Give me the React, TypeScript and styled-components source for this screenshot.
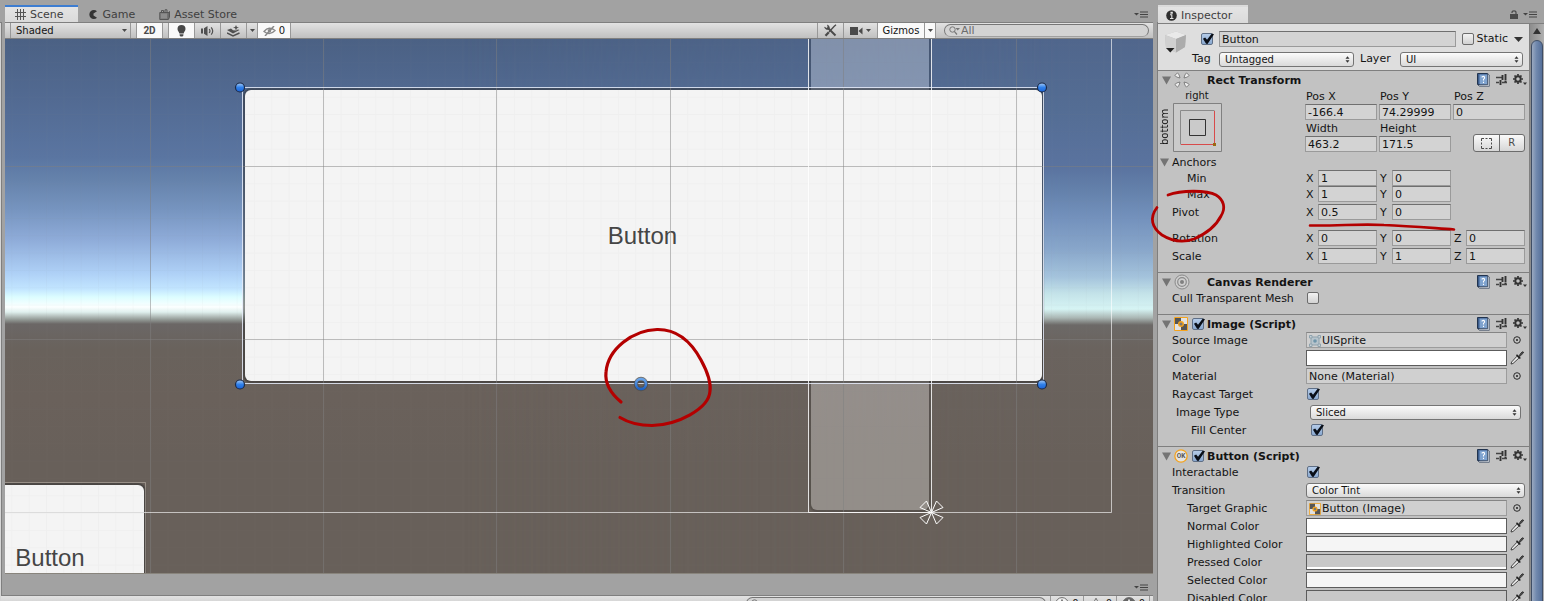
import React, { useId } from 'react';
import styled, { createGlobalStyle, css } from 'styled-components';

const uiFont = '"DejaVu Sans", Verdana, sans-serif';
const line = '#7f7f7f';

const GlobalStyle = createGlobalStyle`
  *, *::before, *::after { box-sizing: border-box; }
  body { margin: 0; background: #a2a2a2; color: #141414; font: 11px/16px ${uiFont}; }
  button, input, select { margin: 0; font: inherit; color: inherit; }
  svg { display: block; flex: none; }
`;

/* ---------- shell ---------- */

const Shell = styled.div`
  display: grid;
  grid-template-columns: 5px minmax(0, 1fr) 387px;
  grid-template-rows: minmax(0, 1fr);
  height: 100vh;
  overflow: hidden;
`;

const LeftSliver = styled.div`
  margin: 22px 3px 0 0;
  background: #d6d6d6;
  border-top: 1px solid ${line};
  border-right: 1px solid ${line};
`;

const Workspace = styled.main`
  display: flex;
  flex-direction: column;
  min-width: 0;
  padding-right: 4px;
`;

const TabBar = styled.div<{ $height: number }>`
  display: flex;
  flex: none;
  align-items: flex-end;
  height: ${(p) => p.$height}px;
  color: #3c3c3c;
`;

const Tab = styled.button<{ $active?: boolean; $focused?: boolean }>`
  display: flex;
  align-items: center;
  gap: 4px;
  height: 17px;
  padding: 0 14px 0 10px;
  border: 0;
  border-top: 2px solid transparent;
  background: none;
  color: #3f3f3f;
  line-height: 15px;
  ${(p) => p.$active && css`background: linear-gradient(#e4e4e4, #dadada);`}
  ${(p) => p.$focused && css`border-top-color: #3d7dd1;`}
`;

const InspectorTab = styled(Tab)`
  height: 18px;
  padding: 0 16px 0 8px;
`;

const TabTools = styled.div<{ $end?: number }>`
  display: flex;
  align-items: center;
  gap: 5px;
  margin-left: auto;
  padding: 0 ${(p) => p.$end ?? 5}px 4px 0;
`;

const Toolbar = styled.div`
  display: flex;
  flex: none;
  height: 17px;
  border-top: 1px solid ${line};
  border-bottom: 1px solid ${line};
  background: linear-gradient(#e2e2e2, #c0c0c0);
`;

const ConsoleBar = styled(Toolbar)`
  margin: 0 0 -11px -4px;
`;

const ToolButton = styled.button<{ $on?: boolean; $width: number }>`
  display: flex;
  align-items: center;
  justify-content: center;
  gap: 3px;
  width: ${(p) => p.$width}px;
  padding: 0;
  border: 0;
  border-right: 1px solid #989898;
  background: ${(p) => (p.$on ? '#f9f9f9' : 'none')};
  font-size: 10px;
  line-height: 15px;
  color: #141414;
`;

const BoldText = styled.b`
  font: bold 10px/15px Roboto, sans-serif;
  color: #4a4a4a;
`;

const ToolGap = styled.span<{ $width: number }>`
  flex: none;
  width: ${(p) => p.$width}px;
  border-right: 1px solid #989898;
`;

const Spacer = styled.span`
  flex: 1;
`;

const ShadeWrap = styled.label`
  position: relative;
  display: flex;
  width: 120px;
  border-right: 1px solid #989898;
  svg { position: absolute; right: 3px; top: 5px; pointer-events: none; }
`;

const ShadeSelect = styled.select`
  appearance: none;
  width: 100%;
  padding: 0 5px;
  border: 0;
  background: none;
  font-size: 10px;
  line-height: 15px;
`;

const SearchBox = styled.label<{ $width: number }>`
  display: flex;
  align-items: center;
  gap: 1px;
  width: ${(p) => p.$width}px;
  height: 13px;
  margin: 1px 4px 1px 8px;
  padding-left: 4px;
  border: 1px solid #767676;
  border-bottom-color: #a0a0a0;
  border-radius: 7px;
  background: #d3d3d3;
`;

const SearchInput = styled.input`
  flex: 1;
  min-width: 0;
  height: 11px;
  padding: 0;
  border: 0;
  outline: 0;
  background: none;
  line-height: 11px;
  &::placeholder { color: #6c6c6c; opacity: 1; }
`;

const ConsoleIcons = styled.div`
  display: flex;
  gap: 1px;
  padding-right: 3px;
  border-left: 1px solid #989898;
`;

/* ---------- scene ---------- */

const Viewport = styled.section`
  position: relative;
  flex: 1;
  min-height: 0;
  overflow: hidden;
  border-bottom: 1px solid #88847c;
  background: linear-gradient(#4b6184 0, #526a92 60px, #5a75a1 118px, #6683ac 142px, #7694bf 170px, #8eabd8 200px, #aed0f6 234px, #c2e5ff 250px, #dcfdff 258px, #fcffff 268px, #e0f0ee 273px, #8f9591 281px, #6b6766 285px, #69625c 310px, #6a615b 360px, #68605a 420px);
  &::before {
    content: '';
    position: absolute;
    inset: 0;
    background: linear-gradient(#50668c 0, #546d94 70px, #5a739f 128px, #6380aa 150px, #7492bd 180px, #88a6ca 210px, #a4c3dc 238px, #c4e3e9 255px, #d6f4f4 270px, #a9b5b2 279px, #6c6967 286px, #6a635e 310px, #68605a 420px);
    mask-image: linear-gradient(to right, transparent 40%, #000 92%);
  }
`;

const SceneWidget = styled.div<{ $x: number; $y: number; $w: number; $h: number }>`
  position: absolute;
  left: ${(p) => p.$x}px;
  top: ${(p) => p.$y}px;
  width: ${(p) => p.$w}px;
  height: ${(p) => p.$h}px;
`;

const ScrollTrack = styled(SceneWidget)`
  border-radius: 0 0 6px 6px;
  background: rgba(255, 255, 255, 0.29);
  box-shadow: 0 0 1px 2px rgba(40, 40, 40, 0.25);
`;

const UiButton = styled(SceneWidget).attrs({ as: 'button', type: 'button' })`
  display: flex;
  align-items: center;
  justify-content: center;
  padding: 0 2px 0 0;
  border: 0;
  border-radius: 6px;
  background: #f4f4f4;
  box-shadow: 0 0 1px 2px rgba(50, 50, 50, 0.55);
  font: 24px/28px "Liberation Sans", Arial, sans-serif;
  color: #454545;
`;

const SceneOverlay = styled.svg`
  position: absolute;
  inset: 0;
  width: 100%;
  height: 100%;
`;

/* ---------- inspector ---------- */

const InspectorPane = styled.aside`
  position: relative;
  display: flex;
  flex-direction: column;
  min-width: 0;
  border-left: 1px solid ${line};
  border-image: linear-gradient(transparent 23px, ${line} 23px) 1;
`;

const InspectorBody = styled.div`
  display: flex;
  flex: 1;
  min-height: 0;
  border-top: 1px solid ${line};
`;

const Components = styled.div`
  flex: 1;
  min-width: 0;
  overflow: hidden;
  background: #c2c2c2;
  border-right: 1px solid ${line};
`;

const ScrollBar = styled.div`
  width: 14px;
  padding: 0 1px;
  overflow: hidden;
  background: linear-gradient(to right, #8c8c8c, #b0b0b0);
  svg { margin: 4px auto 6px; }
`;

const ScrollThumb = styled.div`
  height: 100%;
  border: 1px solid #3f4e66;
  border-radius: 7px 7px 0 0;
  background: linear-gradient(to right, #9aa9c0, #7088ad 45%, #56709a);
`;

const ObjectHeader = styled.header`
  display: grid;
  grid-template-columns: 34px minmax(0, 1fr);
  height: 46px;
  padding: 7px 6px 2px 0;
  background: #dedede;
  > svg { margin-left: 6px; }
`;

const HeaderRows = styled.div`
  display: flex;
  flex-direction: column;
  gap: 4px;
`;

const HeaderLine = styled.div<{ $indent?: number }>`
  display: flex;
  align-items: center;
  gap: 6px;
  height: 16px;
  padding-left: ${(p) => p.$indent ?? 0}px;
`;

const FieldLabel = styled.label<{ $width: number }>`
  width: ${(p) => p.$width}px;
  margin-right: -6px;
`;

const StaticLabel = styled.label`
  display: flex;
  align-items: center;
  gap: 3px;
`;

const Section = styled.section`
  display: flex;
  flex-direction: column;
  gap: 2px;
  padding: 1px 4px 8px 14px;
  border-top: 1px solid ${line};
`;

const SectionTitle = styled.h2`
  display: flex;
  align-items: center;
  height: 16px;
  margin: 0 -2px -2px -10px;
  font-size: 11px;
  line-height: 16px;
`;

const TitleIcons = styled.span`
  display: flex;
  align-items: center;
  width: 35px;
  gap: 3px;
`;

const TitleText = styled.span`
  padding: 1px 0 0 10px;
`;

const TitleTools = styled.span`
  display: flex;
  align-items: center;
  gap: 6px;
  margin-left: auto;
`;

const Row = styled.div<{ $level?: number; $tight?: boolean; $apart?: boolean }>`
  display: grid;
  grid-template-columns: 134px minmax(0, 1fr);
  height: 16px;
  ${(p) => p.$tight && css`margin-top: -2px;`}
  ${(p) => p.$apart && css`margin-top: 8px;`}
  > label, > span:first-child {
    padding-left: ${(p) => p.$level ?? 0}px;
    line-height: 18px;
    white-space: nowrap;
  }
`;

const Control = styled.div<{ $inset?: number }>`
  display: flex;
  align-items: center;
  gap: 2px;
  min-width: 0;
  height: 16px;
  padding: 0 ${(p) => p.$inset ?? 0}px;
`;

const TextField = styled.input`
  flex: 1;
  width: 100%;
  min-width: 0;
  height: 16px;
  padding: 1px 2px 0;
  border: 1px solid #9a9a9a;
  border-top-color: #6f6f6f;
  border-radius: 0;
  outline: 0;
  background: #d3d3d3;
  line-height: 13px;
`;

const ObjectField = styled.button`
  display: flex;
  align-items: center;
  gap: 1px;
  flex: 1;
  height: 16px;
  padding: 1px 2px 0;
  border: 1px solid #9c9c9c;
  border-top-color: #858585;
  background: #d0d0d0;
  line-height: 13px;
  text-align: left;
`;

const Swatch = styled.button<{ $color: string; $alpha?: string }>`
  flex: 1;
  height: 16px;
  padding: 0;
  border: 1px solid #5c5c5c;
  background: linear-gradient(${(p) => p.$color} 12px, ${(p) => p.$alpha ?? p.$color} 12px);
`;

const IconButton = styled.button`
  display: flex;
  align-items: center;
  justify-content: center;
  width: 16px;
  height: 16px;
  padding: 0;
  border: 0;
  background: none;
`;

const Check = styled.input.attrs({ type: 'checkbox' })<{ $gap?: number }>`
  appearance: none;
  position: relative;
  flex: none;
  width: 12px;
  height: 12px;
  margin: 0 0 0 ${(p) => p.$gap ?? 0}px;
  border: 1px solid #6c6c6c;
  border-radius: 2px;
  background: linear-gradient(#f2f2f2, #d2d2d2);
  &:checked { background: linear-gradient(#b4cbe8, #8aa9d0); border-color: #5f6f86; }
  &:checked::after {
    content: '';
    position: absolute;
    inset: -1px -2px 0 0;
    background: #0a0f18;
    clip-path: polygon(8% 52%, 26% 40%, 42% 62%, 82% 4%, 100% 12%, 46% 100%, 34% 98%);
  }
`;

const PopupWrap = styled.span<{ $grow?: number }>`
  position: relative;
  display: block;
  flex: ${(p) => p.$grow ?? 1} 1 0;
  min-width: 0;
  height: 15px;
  svg { position: absolute; right: 4px; top: 4px; pointer-events: none; }
`;

const PopupSelect = styled.select`
  appearance: none;
  display: block;
  width: 100%;
  height: 15px;
  padding: 0 5px;
  border: 1px solid #747474;
  border-radius: 3px;
  background: linear-gradient(#fbfbfb, #dadada);
  font-size: 10px;
  line-height: 13px;
`;

const RectTop = styled.div`
  display: grid;
  grid-template-columns: 134px minmax(0, 1fr);
  margin-left: -1px;
`;

const AnchorWidget = styled.div`
  display: grid;
  grid-template-columns: 16px 48px;
  grid-template-rows: 15px 48px;
  justify-items: center;
  margin-left: -14px;
  font-size: 10px;
  line-height: 16px;
`;

const VerticalText = styled.span`
  grid-row: 2;
  writing-mode: vertical-rl;
  transform: rotate(180deg);
  text-align: center;
`;

const HorizontalText = styled.span`
  grid-column: 2;
`;

const RectFields = styled.div`
  display: grid;
  grid-template-columns: repeat(3, minmax(0, 1fr));
  column-gap: 2px;
`;

const StackedField = styled.label`
  display: grid;
  grid-template-rows: 16px 16px;
  line-height: 18px;
`;

const StackedLabel = styled.span`
  padding-left: 1px;
`;

const ModeButtons = styled.div`
  display: flex;
  align-self: end;
  justify-self: end;
  width: 52px;
  height: 18px;
  border: 1px solid #6c6c6c;
  border-radius: 3px;
  background: linear-gradient(#fafafa, #d6d6d6);
`;

const ModeButton = styled.button`
  display: flex;
  align-items: center;
  justify-content: center;
  flex: 1;
  padding: 0;
  border: 0;
  background: none;
  color: #4a4a4a;
  font-size: 10px;
  & + & { border-left: 1px solid #6c6c6c; }
`;

const VectorGrid = styled.div`
  display: grid;
  grid-template-columns: repeat(3, minmax(0, 1fr));
  gap: 2px;
  height: 16px;
  margin-left: -1px;
  line-height: 18px;
`;

const AxisField = styled.label`
  display: grid;
  grid-template-columns: 12px minmax(0, 1fr);
  padding-left: 1px;
`;

const FoldRow = styled.div`
  display: flex;
  align-items: center;
  gap: 3px;
  height: 16px;
  margin-left: -12px;
  padding-top: 1px;
`;

const Marker = styled.svg`
  position: absolute;
  left: 0;
  top: 0;
  overflow: visible;
  pointer-events: none;
`;

/* ---------- icons ---------- */

const MenuIcon = () => (
  <svg width="14" height="7" viewBox="0 0 14 7">
    <path d="M0 2h5L2.500 4.500z" fill="#444" />
    <path d="M6 1h8M6 3.500h8M6 6h8" stroke="#444" strokeWidth="1.100" />
  </svg>
);
const DownIcon = () => (
  <svg width="5" height="5" viewBox="0 0 5 5"><path d="M0 1h5L2.500 4z" fill="#4a4a4a" /></svg>
);
const WideDownIcon = () => (
  <svg width="9" height="5" viewBox="0 0 9 5"><path d="M0 0h9L4.500 5z" fill="#333" /></svg>
);
const SceneIcon = () => (
  <svg width="11" height="11" viewBox="0 0 11 11"><path d="M2.500 0v11M5.500 0v11M8.500 0v11M0 3.500h11M0 7.500h11" stroke="#555" /></svg>
);
const GameIcon = () => (
  <svg width="11" height="9" viewBox="0 0 11 9"><path d="M9 1.300A4.500 4.500 0 1 0 9 7.700L5.500 5.500v-2z" fill="#333" /></svg>
);
const StoreIcon = () => (
  <svg width="11" height="11" viewBox="0 0 11 11">
    <path d="M.8 3.500h8.400v7H.8z" fill="#808080" stroke="#555" />
    <path d="M2.500 3.500V1.500h2v2M6 3.500V.8h2v2.700M9.200 4l1.300-1.500v6L9.200 10.500" fill="none" stroke="#555" />
    <path d="M2 6h6M2 8h6" stroke="#999" />
  </svg>
);
const BulbIcon = () => (
  <svg width="9" height="12" viewBox="0 0 9 12"><path d="M4.500 0a4 4 0 0 1 4 4c0 2-1.500 2.500-1.800 4.500H2.300C2 6.500.5 6 .5 4a4 4 0 0 1 4-4zM2.600 9.300h3.800v1.200L5.500 11.500h-2l-.9-1z" fill="#484848" /></svg>
);
const AudioIcon = () => (
  <svg width="13" height="12" viewBox="0 0 13 12">
    <path d="M0 3.500h2v5H0zM3 3.300L6.500 1v10L3 8.700z" fill="#505050" />
    <path d="M8.200 4q1.500 2 0 4M10.200 2.300q3 3.700 0 7.400" fill="none" stroke="#505050" strokeWidth="1.200" />
  </svg>
);
const LayersIcon = () => (
  <svg width="13" height="12" viewBox="0 0 13 12">
    <path d="M0 5l4-1.500 2 1.800 3 .2 2-1 1.500.5L6 8.500z" fill="#505050" />
    <path d="M0 8l6 3 6.500-3" fill="none" stroke="#505050" strokeWidth="1.500" />
    <path d="M9 0l.9 1.900 2.100.6-2.100.8L9 5.500l-.9-2.200L6 2.500l2.100-.6z" fill="#505050" />
  </svg>
);
const EyeOffIcon = () => (
  <svg width="13" height="10" viewBox="0 0 13 10">
    <path d="M1 5.500Q6-.5 12 4.500 7 10 1 5.500z" fill="none" stroke="#888" strokeWidth="1.300" />
    <circle cx="6.500" cy="4.800" r="1.800" fill="#888" />
    <path d="M2 10L11 0" stroke="#888" strokeWidth="1.500" />
  </svg>
);
const ToolsIcon = () => (
  <svg width="13" height="13" viewBox="0 0 13 13">
    <path d="M4 4l7.500 7.500" stroke="#4a4a4a" strokeWidth="2" />
    <path d="M.6 3.300L2.500 4.300 4 3.200 3.500 1A3 3 0 0 1 4.800 5.200 3 3 0 0 1 .6 3.300z" fill="#4a4a4a" stroke="#4a4a4a" strokeWidth=".7" />
    <path d="M1.500 11.800L4.800 8.300" stroke="#4a4a4a" strokeWidth="2.300" />
    <path d="M5 8l5.500-6M10 2.500L12 .8" stroke="#4a4a4a" strokeWidth="1.300" />
  </svg>
);
const CameraIcon = () => (
  <svg width="13" height="8" viewBox="0 0 13 8"><path d="M0 0h8v8H0zM8.500 4L12.500.5v7z" fill="#4a4a4a" /></svg>
);
const SearchIcon = () => (
  <svg width="11" height="9" viewBox="0 0 11 9">
    <circle cx="3.500" cy="3.500" r="2.700" fill="none" stroke="#777" />
    <path d="M5.300 5.300L8 8.500" stroke="#777" strokeWidth="1.200" />
    <path d="M6.500 2h4.500L8.700 4.500z" fill="#777" />
  </svg>
);
const InfoIcon = () => (
  <svg width="11" height="11" viewBox="0 0 11 11">
    <circle cx="5.500" cy="5.500" r="5.300" fill="#2f2f2f" />
    <path d="M4 4.800h1.800v3.500M4 8.500h3.500M5 2.200h1.300v.9H5z" stroke="#e4e4e4" strokeWidth="1.100" fill="none" />
  </svg>
);
const MessageIcon = ({ fill = '#f4f4f4', mark = '#777' }) => (
  <svg width="14" height="14" viewBox="0 0 14 14">
    <circle cx="7" cy="7" r="6.400" fill={fill} stroke="#6c6c6c" />
    <path d="M7 2.500v6M7 10v1.500" stroke={mark} strokeWidth="1.800" />
  </svg>
);
const WarningIcon = () => (
  <svg width="14" height="14" viewBox="0 0 14 14"><path d="M7 1.200l6 11.300H1z" fill="#eee" stroke="#6c6c6c" /><path d="M7 5v4" stroke="#777" strokeWidth="1.500" /></svg>
);
const LockIcon = () => (
  <svg width="8" height="9" viewBox="0 0 8 9">
    <path d="M0 4h8v5H0z" fill="#4a4a4a" />
    <path d="M2 3V2.500Q2 .8 4 .8T6 2.500V4" fill="none" stroke="#4a4a4a" strokeWidth="1.200" />
  </svg>
);
const CubeIcon = () => (
  <svg width="23" height="24" viewBox="0 0 23 24">
    <path d="M12 .5L22 4 21 16 12 21.500 2 17 1 4z" fill="#bdbdbd" />
    <path d="M12 .5L22 4 12 8 1 4z" fill="#e9e9e9" />
    <path d="M1 4l11 4v13.500L2 17z" fill="#d0d0d0" />
    <path d="M22 4L12 8v13.500L21 16z" fill="#acacac" />
    <path d="M2 17h8.500L6.300 21.500z" fill="#222" />
  </svg>
);
const UpDownIcon = () => (
  <svg width="5" height="7" viewBox="0 0 5 7"><path d="M.5 2.700h4L2.500.3zM.5 4.300h4L2.500 6.700z" fill="#333" /></svg>
);
const FoldIcon = () => (
  <svg width="9" height="9" viewBox="0 0 9 9"><path d="M0 .5h9L4.500 8.500z" fill="#747474" /></svg>
);
const RectIcon = () => (
  <svg width="16" height="16" viewBox="0 0 16 16">
    {[0, 90, 180, 270].map((a) => (
      <path key={a} transform={`rotate(${a} 8 8)`} d="M.8 3.500L3.500.8Q5.500 2.500 6 6 2.500 5.500.8 3.500z" fill="#eee" stroke="#777" strokeWidth=".9" />
    ))}
  </svg>
);
const CanvasIcon = () => (
  <svg width="16" height="16" viewBox="0 0 16 16">
    <circle cx="8" cy="8" r="7" fill="#cfcfcf" stroke="#8a8a8a" />
    <circle cx="8" cy="8" r="4.300" fill="none" stroke="#8a8a8a" strokeWidth="1.200" />
    <circle cx="8" cy="8" r="2" fill="#808080" />
  </svg>
);
const ImageIcon = ({ size = 14 }) => (
  <svg width={size} height={size} viewBox="0 0 14 14">
    <path d="M.5.500h13v13H.5z" fill="#e2e2e2" stroke="#f5a31c" />
    <path d="M1 1h6v6H1zM7 7h6v6H7z" fill="#555" />
    <circle cx="7" cy="7" r="2.300" fill="#777" stroke="#f5a31c" strokeWidth="1.400" />
  </svg>
);
const OkIcon = () => (
  <svg width="14" height="14" viewBox="0 0 15 15">
    <circle cx="7.500" cy="7.500" r="6.600" fill="#e4e4e4" stroke="#f5a31c" strokeWidth="1.400" />
    <text x="7.500" y="10" textAnchor="middle" fontFamily="Roboto, sans-serif" fontWeight="bold" fontSize="7" fill="#555">OK</text>
  </svg>
);
const BookIcon = () => (
  <svg width="13" height="14" viewBox="0 0 13 14">
    <path d="M.5.500h10v11H.5z" fill="#3c5d8c" stroke="#22344f" />
    <path d="M2.500 1.500h8V11.500h-8z" fill="#7fa3cf" />
    <path d="M1 12l1.500 1.300H12.300V2L10.800.8V11.800z" fill="#e5e8ec" stroke="#33445c" strokeWidth=".7" />
    <path d="M4.700 4.300Q6 2.700 7.500 4 8.200 5.200 6.500 6.400V7.500M6.500 8.700v1.300" fill="none" stroke="#fff" strokeWidth="1.100" />
  </svg>
);
const PresetIcon = () => (
  <svg width="11" height="12" viewBox="0 0 11 12">
    <path d="M0 3.500h6M0 8.500h3M6 8.500h5" stroke="#444" strokeWidth="1.300" />
    <path d="M6.500 1v5M9.500 0v6.500M4.500 6v5" stroke="#333" strokeWidth="1.900" />
    <path d="M8.500 7.500h2" stroke="#333" />
  </svg>
);
const GearIcon = () => (
  <svg width="14" height="12" viewBox="0 0 14 12">
    <circle cx="5" cy="5" r="2.700" fill="none" stroke="#333" strokeWidth="1.900" />
    <path d="M5 0v1.800M5 8.200V10M0 5h1.800M8.200 5H10M1.500 1.500l1.200 1.200M7.300 7.300l1.200 1.200M1.500 8.500l1.200-1.200M7.300 2.700l1.200-1.200" stroke="#333" strokeWidth="1.700" />
    <path d="M10 8.500h4L12 11z" fill="#333" />
  </svg>
);
const SpriteIcon = () => (
  <svg width="12" height="12" viewBox="0 0 12 12">
    <path d="M2 2h8v8H2z" fill="#b7c4cc" stroke="#8fa3ae" />
    <path d="M.5.500h2.500v2.500H.5zM9 .5h2.500v2.500H9zM.5 9h2.500v2.500H.5zM9 9h2.500v2.500H9z" fill="#c9d2d8" stroke="#8fa3ae" />
    <circle cx="6" cy="6" r="1.800" fill="#6f95aa" />
  </svg>
);
const TargetIcon = () => (
  <svg width="8" height="8" viewBox="0 0 8 8"><circle cx="4" cy="4" r="3.300" fill="none" stroke="#2c2c2c" /><circle cx="4" cy="4" r="1" fill="#222" /></svg>
);
const DropperIcon = () => (
  <svg width="14" height="14" viewBox="0 0 14 14">
    <path d="M1 13l.6-2L7 5.200l1.900 1.900L3 12.500z" fill="#eee" stroke="#333" strokeWidth=".9" />
    <path d="M6.500 3.700l3.800 3.800" stroke="#222" strokeWidth="1.600" />
    <path d="M8.500 5.500L11 2Q12.500.2 13.300 1T12 3.300L9.200 6z" fill="#555" stroke="#222" strokeWidth=".8" />
  </svg>
);
const AnchorPreview = () => (
  <svg width="49" height="49" viewBox="0 0 49 49">
    <path d="M.5.500h48v48H.5z" fill="#cacaca" stroke="#808080" />
    <path d="M41.500 7.500h-34v34" fill="none" stroke="#8a8a8a" />
    <path d="M41.500 8v33.500H8" fill="none" stroke="#d84b4b" />
    <path d="M16.500 16.500h16v16h-16z" fill="none" stroke="#333" />
    <path d="M40 40h3v3h-3z" fill="#9a6a12" />
  </svg>
);
const DashedIcon = () => (
  <svg width="11" height="11" viewBox="0 0 11 11"><path d="M.5 3V.5H3M8 .5h2.500V3M10.500 8v2.500H8M3 10.500H.5V8M4.500.5h2M4.500 10.500h2M.5 4.500v2M10.500 4.500v2" fill="none" stroke="#4a4a4a" /></svg>
);

/* ---------- scene drawing ---------- */

const handles = [[240, 87], [1042, 87], [240, 384], [1042, 384]];
const columns = [150, 323, 496, 670, 843, 1016];

function SceneGizmos() {
  return (
    <SceneOverlay aria-hidden="true">
      <defs>
        <linearGradient id="knob" x1="0" y1="0" x2="0" y2="1">
          <stop offset="0" stopColor="#a9cdf8" /><stop offset=".5" stopColor="#2f80ea" /><stop offset="1" stopColor="#1a62d6" />
        </linearGradient>
        <linearGradient id="ring" x1="0" y1="0" x2="0" y2="1">
          <stop offset="0" stopColor="#6aa5ea" /><stop offset="1" stopColor="#1d62c4" />
        </linearGradient>
        <pattern id="minor" width="17.330" height="17.330" patternUnits="userSpaceOnUse" x="150" y="166">
          <path d="M.5 0v17.330M0 .5h17.330" stroke="#888" strokeOpacity=".04" fill="none" />
        </pattern>
      </defs>
      <g transform="translate(-5 -39)">
        <rect x="5" y="39" width="100%" height="100%" fill="url(#minor)" />
        <g stroke="#808080" strokeOpacity=".48">
          {columns.map((x) => <path key={x} d={`M${x + 0.5} 39v2000`} />)}
          <path d="M5 166.500h4000M5 339.500h4000" />
        </g>
        <g fill="none" stroke="#fff">
          <path d="M5 482.500h140.500v2000" stroke="#d8cfc4" strokeOpacity=".45" />
          <path d="M144 512.500h967.500V39" strokeOpacity=".62" />
          <path d="M5 512.500h139" stroke="#dcdcdc" />
          <path d="M808.500 39v473.500h122.500M931.500 39v473.500" strokeOpacity=".82" />
          <path d="M242.500 87.500h801v296h-801z" stroke="#e6ecfa" strokeOpacity=".85" />
        </g>
        {handles.map(([x, y]) => (
          <circle key={`${x}-${y}`} cx={x} cy={y + 0.5} r="4.500" fill="url(#knob)" stroke="#1b2a48" strokeWidth="1.200" />
        ))}
        <circle cx="641" cy="384" r="5" fill="none" stroke="#4a4a4a" strokeWidth="4.400" strokeOpacity=".75" />
        <circle cx="641" cy="384" r="5" fill="none" stroke="url(#ring)" strokeWidth="2.600" />
        <g transform="translate(931.500 512.500)" fill="none" stroke="#fff">
          {[0, 90, 180, 270].map((a) => <path key={a} transform={`rotate(${a})`} d="M0 0L-11.500-5-5-11.500z" />)}
        </g>
        <path
          d="M621 402C609 392 605 381 606 372C608 349 633 330 657 329.500C681 329 694 347 701 360C707 371 711 383 710 391C709 409 677 425 652 425.500C639 425.500 629 423 620 417.500"
          fill="none" stroke="#b40000" strokeWidth="3.200" strokeLinecap="round"
        />
      </g>
    </SceneOverlay>
  );
}

/* ---------- inspector parts ---------- */

function Popup({ id, value, grow }: { id?: string; value: string; grow?: number }) {
  return (
    <PopupWrap $grow={grow}>
      <PopupSelect id={id} defaultValue={value}><option>{value}</option></PopupSelect>
      <UpDownIcon />
    </PopupWrap>
  );
}

function Title({ icon, toggle, children }: { icon: React.ReactNode; toggle?: boolean; children: string }) {
  return (
    <SectionTitle>
      <TitleIcons><FoldIcon />{icon}{toggle && <Check defaultChecked $gap={1} aria-label={`Enable ${children}`} />}</TitleIcons>
      <TitleText>{children}</TitleText>
      <TitleTools><BookIcon /><PresetIcon /><GearIcon /></TitleTools>
    </SectionTitle>
  );
}

type VectorProps = { label: string; values: [string, string][]; level?: number; tight?: boolean; apart?: boolean };
function VectorRow({ label, values, level, tight, apart }: VectorProps) {
  return (
    <Row $level={level} $tight={tight} $apart={apart}>
      <span>{label}</span>
      <VectorGrid>
        {values.map(([axis, value]) => (
          <AxisField key={axis}>{axis}<TextField defaultValue={value} aria-label={`${label} ${axis}`} /></AxisField>
        ))}
      </VectorGrid>
    </Row>
  );
}

function Field({ name, value }: { name: string; value: string }) {
  return <StackedField><StackedLabel>{name}</StackedLabel><TextField defaultValue={value} /></StackedField>;
}

function CheckRow({ label, checked, level, inset }: { label: string; checked?: boolean; level?: number; inset?: number }) {
  const id = useId();
  return (
    <Row $level={level}>
      <label htmlFor={id}>{label}</label>
      <Control $inset={inset}><Check id={id} $gap={1} defaultChecked={checked} /></Control>
    </Row>
  );
}

function PopupRow({ label, value, level, inset }: { label: string; value: string; level?: number; inset?: number }) {
  const id = useId();
  return (
    <Row $level={level}>
      <label htmlFor={id}>{label}</label>
      <Control $inset={inset}><Popup id={id} value={value} /></Control>
    </Row>
  );
}

function ObjectRow({ label, value, icon, level }: { label: string; value: string; icon?: React.ReactNode; level?: number }) {
  const id = useId();
  return (
    <Row $level={level}>
      <label htmlFor={id}>{label}</label>
      <Control>
        <ObjectField id={id}>{icon}{value}</ObjectField>
        <IconButton aria-label={`Pick ${label}`}><TargetIcon /></IconButton>
      </Control>
    </Row>
  );
}

function ColorRow({ label, color, alpha, level }: { label: string; color: string; alpha?: string; level?: number }) {
  const id = useId();
  return (
    <Row $level={level}>
      <label htmlFor={id}>{label}</label>
      <Control>
        <Swatch id={id} $color={color} $alpha={alpha} />
        <IconButton aria-label={`Sample ${label}`}><DropperIcon /></IconButton>
      </Control>
    </Row>
  );
}

function Inspector() {
  return (
    <InspectorPane>
      <TabBar $height={23}>
        <InspectorTab $active><InfoIcon />Inspector</InspectorTab>
        <TabTools $end={7}><LockIcon /><MenuIcon /></TabTools>
      </TabBar>
      <InspectorBody>
        <Components>
          <ObjectHeader>
            <CubeIcon />
            <HeaderRows>
              <HeaderLine $indent={9}>
                <Check defaultChecked aria-label="Active" />
                <TextField defaultValue="Button" aria-label="Name" />
                <StaticLabel><Check />Static</StaticLabel>
                <WideDownIcon />
              </HeaderLine>
              <HeaderLine>
                <FieldLabel $width={27} htmlFor="tag">Tag</FieldLabel>
                <Popup id="tag" value="Untagged" grow={135} />
                <FieldLabel $width={40} htmlFor="layer">Layer</FieldLabel>
                <Popup id="layer" value="UI" grow={123} />
              </HeaderLine>
            </HeaderRows>
          </ObjectHeader>

          <Section>
            <Title icon={<RectIcon />}>Rect Transform</Title>
            <RectTop>
              <AnchorWidget>
                <HorizontalText>right</HorizontalText>
                <VerticalText>bottom</VerticalText>
                <AnchorPreview />
              </AnchorWidget>
              <RectFields>
                <Field name="Pos X" value="-166.4" />
                <Field name="Pos Y" value="74.29999" />
                <Field name="Pos Z" value="0" />
                <Field name="Width" value="463.2" />
                <Field name="Height" value="171.5" />
                <ModeButtons>
                  <ModeButton aria-label="Blueprint mode"><DashedIcon /></ModeButton>
                  <ModeButton>R</ModeButton>
                </ModeButtons>
              </RectFields>
            </RectTop>
            <FoldRow><FoldIcon />Anchors</FoldRow>
            <VectorRow label="Min" level={15} tight values={[['X', '1'], ['Y', '0']]} />
            <VectorRow label="Max" level={15} tight values={[['X', '1'], ['Y', '0']]} />
            <VectorRow label="Pivot" values={[['X', '0.5'], ['Y', '0']]} />
            <VectorRow label="Rotation" apart values={[['X', '0'], ['Y', '0'], ['Z', '0']]} />
            <VectorRow label="Scale" values={[['X', '1'], ['Y', '1'], ['Z', '1']]} />
          </Section>

          <Section>
            <Title icon={<CanvasIcon />}>Canvas Renderer</Title>
            <CheckRow label="Cull Transparent Mesh" />
          </Section>

          <Section>
            <Title icon={<ImageIcon />} toggle>Image (Script)</Title>
            <ObjectRow label="Source Image" value="UISprite" icon={<SpriteIcon />} />
            <ColorRow label="Color" color="#fff" />
            <ObjectRow label="Material" value="None (Material)" />
            <CheckRow label="Raycast Target" checked />
            <PopupRow label="Image Type" value="Sliced" level={4} inset={4} />
            <CheckRow label="Fill Center" checked level={19} inset={4} />
          </Section>

          <Section>
            <Title icon={<OkIcon />} toggle>Button (Script)</Title>
            <CheckRow label="Interactable" checked />
            <PopupRow label="Transition" value="Color Tint" />
            <ObjectRow label="Target Graphic" value="Button (Image)" icon={<ImageIcon size={12} />} level={15} />
            <ColorRow label="Normal Color" color="#fff" level={15} />
            <ColorRow label="Highlighted Color" color="#f5f5f5" level={15} />
            <ColorRow label="Pressed Color" color="#c8c8c8" alpha="#fff" level={15} />
            <ColorRow label="Selected Color" color="#f5f5f5" level={15} />
            <ColorRow label="Disabled Color" color="#c8c8c8" alpha="#777" level={15} />
          </Section>
        </Components>
        <ScrollBar>
          <svg width="8" height="6" viewBox="0 0 8 6"><path d="M4 0l4 6H0z" fill="#333" /></svg>
          <ScrollThumb />
        </ScrollBar>
      </InspectorBody>
      <Marker width="387" height="260" aria-hidden="true">
        <g transform="translate(-1158 0)" fill="none" stroke="#b40000" strokeLinecap="round">
          <path strokeWidth="2.800" d="M1168 195C1181 190 1207 190 1216 195C1224 200 1226 208 1221 216C1215 228 1203 235 1194 239C1180 244 1170 240 1162 235C1152 228 1149 218 1157 207.500" />
          <path strokeWidth="2.600" d="M1310 225.500C1340 226 1360 223.500 1384 225C1410 226 1432 228 1454 229.500" />
        </g>
      </Marker>
    </InspectorPane>
  );
}

export default function App() {
  return (
    <>
      <GlobalStyle />
      <Shell>
        <LeftSliver />
        <Workspace>
          <TabBar $height={22}>
            <Tab $active $focused><SceneIcon />Scene</Tab>
            <Tab><GameIcon />Game</Tab>
            <Tab><StoreIcon />Asset Store</Tab>
            <TabTools><MenuIcon /></TabTools>
          </TabBar>
          <Toolbar>
            <ToolGap $width={6} />
            <ShadeWrap>
              <ShadeSelect aria-label="Draw mode" defaultValue="Shaded"><option>Shaded</option></ShadeSelect>
              <DownIcon />
            </ShadeWrap>
            <ToolGap $width={6} />
            <ToolButton $width={26} $on><BoldText>2D</BoldText></ToolButton>
            <ToolGap $width={6} />
            <ToolButton $width={26} $on aria-label="Lighting"><BulbIcon /></ToolButton>
            <ToolButton $width={26} aria-label="Audio"><AudioIcon /></ToolButton>
            <ToolButton $width={26} aria-label="Effects"><LayersIcon /></ToolButton>
            <ToolButton $width={11} aria-label="Effects menu"><DownIcon /></ToolButton>
            <ToolButton $width={33} $on><EyeOffIcon />0</ToolButton>
            <Spacer />
            <ToolGap $width={1} />
            <ToolButton $width={26} aria-label="Tools"><ToolsIcon /></ToolButton>
            <ToolButton $width={34} aria-label="Camera"><CameraIcon /><DownIcon /></ToolButton>
            <ToolButton $width={47} $on>Gizmos</ToolButton>
            <ToolButton $width={11} $on aria-label="Gizmos menu"><DownIcon /></ToolButton>
            <SearchBox $width={205}><SearchIcon /><SearchInput placeholder="All" aria-label="Search scene" /></SearchBox>
          </Toolbar>
          <Viewport aria-label="Scene view">
            <ScrollTrack $x={806} $y={-6} $w={118} $h={477} />
            <UiButton $x={240} $y={51} $w={797} $h={291}>Button</UiButton>
            <UiButton $x={-47} $y={446} $w={186} $h={145}>Button</UiButton>
            <SceneGizmos />
          </Viewport>
          <TabBar $height={21}><TabTools><MenuIcon /></TabTools></TabBar>
          <ConsoleBar>
            <Spacer />
            <SearchBox $width={300}><SearchIcon /><SearchInput aria-label="Search console" /></SearchBox>
            <ConsoleIcons>
              <ToolButton $width={33} aria-label="Messages"><MessageIcon />0</ToolButton>
              <ToolButton $width={32} aria-label="Warnings"><WarningIcon />0</ToolButton>
              <ToolButton $width={32} aria-label="Errors"><MessageIcon fill="#666" mark="#eee" />0</ToolButton>
            </ConsoleIcons>
          </ConsoleBar>
        </Workspace>
        <Inspector />
      </Shell>
    </>
  );
}
